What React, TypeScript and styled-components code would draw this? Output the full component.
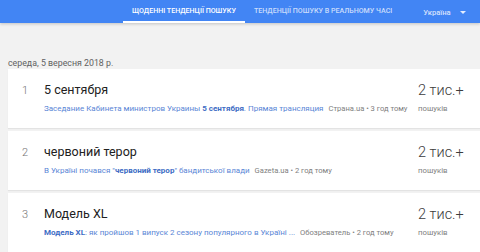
import styled, { createGlobalStyle } from 'styled-components'

const Global = createGlobalStyle`
  body {
    margin: 0;
    background: #f2f2f2;
    font-family: Roboto, 'Liberation Sans', sans-serif;
  }
`

const Page = styled.div`
  width: 480px;
  height: 252px;
  overflow: hidden;
  background: #f2f2f2;
`

const Header = styled.div`
  height: 23px;
  background: #4285f4;
  display: flex;
  align-items: stretch;
  padding-left: 123px;
  box-shadow: 0 1px 3px rgba(0, 0, 0, 0.2);
`

const Tab = styled.div<{ $active?: boolean }>`
  display: flex;
  align-items: center;
  padding: 0 9px;
  margin-right: ${(p) => (p.$active ? '0' : '22px')};
  font-size: 7.1px;
  font-weight: 500;
  color: ${(p) => (p.$active ? '#fff' : 'rgba(255,255,255,0.72)')};
  border-bottom: 2px solid ${(p) => (p.$active ? '#fff' : 'transparent')};
  text-transform: uppercase;
  white-space: nowrap;
`

const Geo = styled.div`
  display: flex;
  align-items: center;
  gap: 9px;
  font-size: 7.6px;
  font-weight: 500;
  color: rgba(255, 255, 255, 0.78);
  padding-top: 1px;
`

const Caret = styled.span`
  width: 0;
  height: 0;
  border-left: 3px solid transparent;
  border-right: 3px solid transparent;
  border-top: 3.5px solid rgba(255, 255, 255, 0.85);
`

const DateLabel = styled.div`
  padding: 35px 0 0 8px;
  height: 11px;
  font-size: 8.8px;
  color: #616161;
`

const List = styled.div`
  padding-left: 8px;
  display: flex;
  flex-direction: column;
  gap: 3px;
`

const Card = styled.div`
  width: 480px;
  height: 59px;
  background: #fff;
  box-shadow: 0 1px 1px rgba(0, 0, 0, 0.06);
  display: flex;
  align-items: flex-start;
`

const Rank = styled.div`
  width: 36px;
  padding: 15px 0 0 14px;
  box-sizing: border-box;
  font-size: 11px;
  font-weight: 300;
  color: #757575;
`

const Body = styled.div`
  flex: 0 0 374px;
  padding-top: 13px;
  overflow: hidden;
`

const Title = styled.div`
  font-size: 12.5px;
  color: #212121;
  line-height: 16px;
`

const Sub = styled.div`
  margin-top: 6px;
  font-size: 8px;
  white-space: nowrap;
  color: #5a86d6;
`

const Strong = styled.b`
  font-weight: 700;
  color: #3d6cc4;
`

const Source = styled.span`
  margin-left: 5px;
  font-size: 7.6px;
  color: #808080;
`

const Count = styled.div`
  padding-top: 14px;
`

const Volume = styled.div`
  font-size: 14.5px;
  font-weight: 300;
  color: #3c3c3c;
  line-height: 16px;
`

const VolumeLabel = styled.div`
  margin-top: 5px;
  font-size: 7.8px;
  color: #808080;
`

type Item = {
  rank: number
  title: string
  sub: React.ReactNode
  source: string
}

const items: Item[] = [
  {
    rank: 1,
    title: '5 сентября',
    sub: (
      <>
        Заседание Кабинета министров Украины <Strong>5 сентября</Strong>. Прямая трансляция
      </>
    ),
    source: 'Страна.ua • 3 год тому',
  },
  {
    rank: 2,
    title: 'червоний терор',
    sub: (
      <>
        В Україні почався "<Strong>червоний терор</Strong>" бандитської влади
      </>
    ),
    source: 'Gazeta.ua • 2 год тому',
  },
  {
    rank: 3,
    title: 'Модель XL',
    sub: (
      <>
        <Strong>Модель XL</Strong>: як пройшов 1 випуск 2 сезону популярного в Україні ...
      </>
    ),
    source: 'Обозреватель • 2 год тому',
  },
]

export default function App() {
  return (
    <Page>
      <Global />
      <Header>
        <Tab $active>Щоденні тенденції пошуку</Tab>
        <Tab>Тенденції пошуку в реальному часі</Tab>
        <Geo>
          Україна
          <Caret />
        </Geo>
      </Header>
      <DateLabel>середа, 5 вересня 2018 р.</DateLabel>
      <List>
        {items.map((it) => (
          <Card key={it.rank}>
            <Rank>{it.rank}</Rank>
            <Body>
              <Title>{it.title}</Title>
              <Sub>
                {it.sub}
                <Source>{it.source}</Source>
              </Sub>
            </Body>
            <Count>
              <Volume>2 тис.+</Volume>
              <VolumeLabel>пошуків</VolumeLabel>
            </Count>
          </Card>
        ))}
      </List>
    </Page>
  )
}
